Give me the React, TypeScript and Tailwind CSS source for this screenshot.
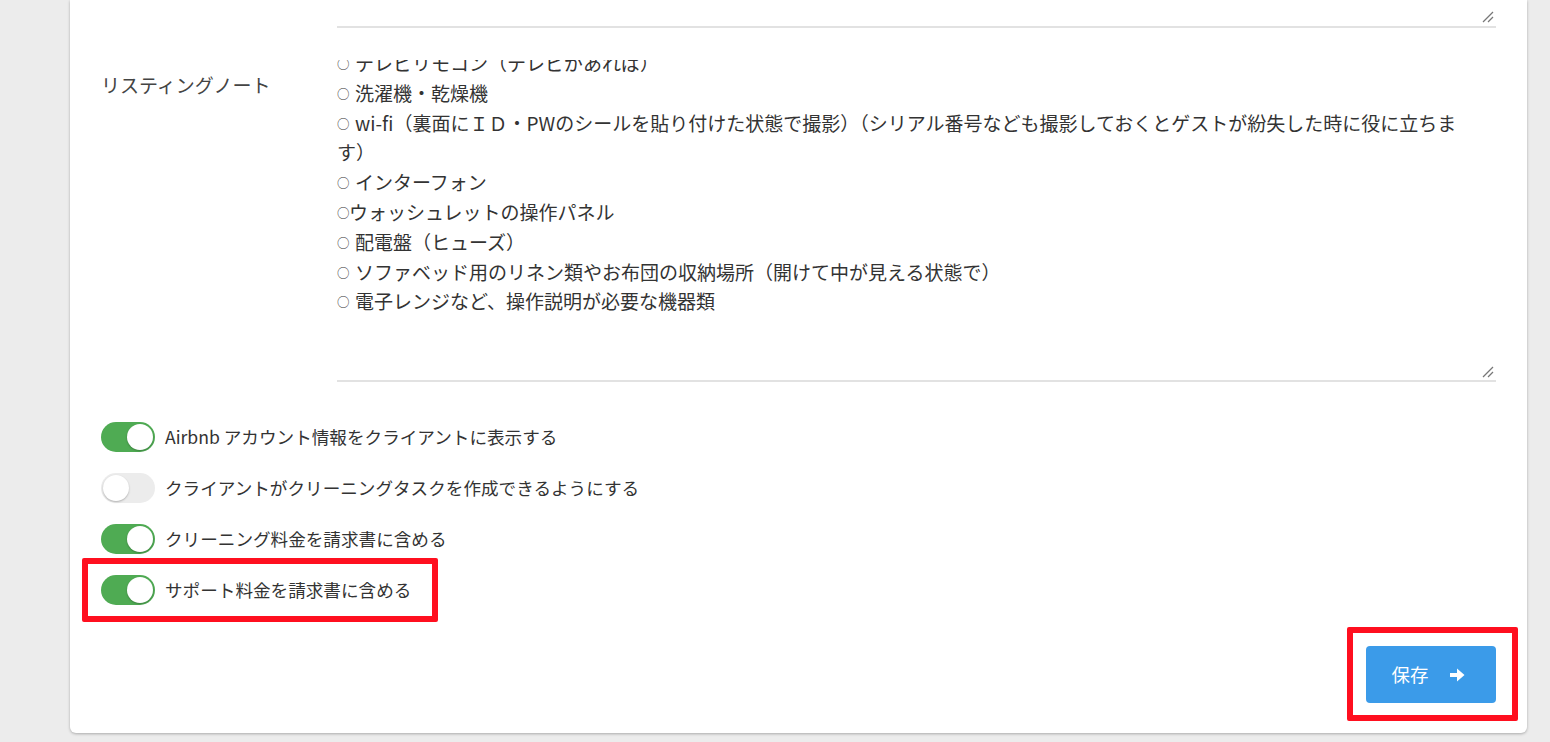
import React from "react";

const font = { fontFamily: '"Noto Sans CJK JP", "Noto Sans", sans-serif' };

function ResizeHandle() {
  return (
    <svg width="12" height="12" viewBox="0 0 12 12" className="block">
      <line x1="1" y1="11" x2="11" y2="1" stroke="#777" strokeWidth="1.2" />
      <line x1="6" y1="11" x2="11" y2="6" stroke="#777" strokeWidth="1.2" />
    </svg>
  );
}

function Toggle({ on }: { on: boolean }) {
  return (
    <div
      className={
        "flex h-[30px] w-[54px] shrink-0 items-center rounded-full p-[2px] " +
        (on ? "justify-end bg-[#4fab53]" : "justify-start bg-[#ececec]")
      }
    >
      <div className="h-[26px] w-[26px] rounded-full bg-white shadow-[0_1px_2px_rgba(0,0,0,0.25)]" />
    </div>
  );
}

const lines: [boolean, boolean, string][] = [
  [true, true, "テレビリモコン（テレビがあれば）"],
  [true, true, "洗濯機・乾燥機"],
  [true, true, "wi-fi（裏面にＩＤ・PWのシールを貼り付けた状態で撮影）（シリアル番号なども撮影しておくとゲストが紛失した時に役に立ちま"],
  [false, false, "す）"],
  [true, true, "インターフォン"],
  [true, false, "ウォッシュレットの操作パネル"],
  [true, true, "配電盤（ヒューズ）"],
  [true, true, "ソファベッド用のリネン類やお布団の収納場所（開けて中が見える状態で）"],
  [true, true, "電子レンジなど、操作説明が必要な機器類"],
];

const toggles = [
  { on: true, label: "Airbnb アカウント情報をクライアントに表示する" },
  { on: false, label: "クライアントがクリーニングタスクを作成できるようにする" },
  { on: true, label: "クリーニング料金を請求書に含める" },
  { on: true, label: "サポート料金を請求書に含める" },
];

export default function App() {
  return (
    <div className="relative h-[742px] w-[1550px] overflow-hidden bg-[#ececec]" style={font}>
      <div className="ml-[70px] mr-[23px] rounded-b-[6px] bg-white px-[31px] pb-[30px] shadow-[0_1px_3px_rgba(0,0,0,0.28)]">
        {/* previous textarea (bottom part only) */}
        <div className="flex">
          <div className="w-[236px] shrink-0" />
          <div className="relative flex h-[28px] flex-1 items-end justify-end border-b-2 border-[#e2e2e2] pb-[3px] pr-[2px]">
            <ResizeHandle />
          </div>
        </div>

        {/* listing note */}
        <div className="mt-[29px] flex">
          <div className="w-[236px] shrink-0 pt-[13px] text-[19px] leading-[30px] text-[#444]">
            リスティングノート
          </div>
          <div className="flex-1 border-b-2 border-[#e2e2e2]">
            <div className="mt-[3px] h-[320px] overflow-hidden">
              <div className="-mt-[12px] text-[19px] leading-[29.8px] text-[#333]">
                {lines.map(([bullet, space, text], i) => (
                  <div key={i} className="whitespace-nowrap">
                    {bullet && <span className="inline-block w-[12px] text-[12.5px] leading-none align-[2px]">○</span>}
                    {space && <span className="inline-block w-[6px]" />}
                    {text}
                  </div>
                ))}
              </div>
            </div>
            <div className="-mt-[14px] flex justify-end pb-[2px] pr-[2px]">
              <ResizeHandle />
            </div>
          </div>
        </div>

        {/* toggles */}
        <div className="mt-[40px] flex flex-col gap-[21px]">
          {toggles.map((t, i) => (
            <div key={i} className="flex h-[30px] items-center gap-[10px]">
              <Toggle on={t.on} />
              <span className="text-[17.6px] leading-none text-[#333]">{t.label}</span>
            </div>
          ))}
        </div>

        {/* save */}
        <div className="mt-[41px] flex justify-end">
          <button className="flex h-[57px] w-[130px] items-center justify-center gap-[21px] rounded-[4px] bg-[#3b9be9] pr-[6px] text-[18.5px] text-white">
            <span>保存</span>
            <svg width="15" height="14" viewBox="0 0 15 14" className="block">
              <path d="M0 5 H7 V0.5 L14.5 7 L7 13.5 V9 H0 Z" fill="white" />
            </svg>
          </button>
        </div>
      </div>

      {/* annotation boxes */}
      <div className="pointer-events-none absolute left-[82px] top-[558px] h-[64px] w-[356px] rounded-[2px] border-[6px] border-[#ff0f1f]" />
      <div className="pointer-events-none absolute left-[1347px] top-[627px] h-[94px] w-[171px] rounded-[2px] border-[6px] border-[#ff0f1f]" />
    </div>
  );
}
